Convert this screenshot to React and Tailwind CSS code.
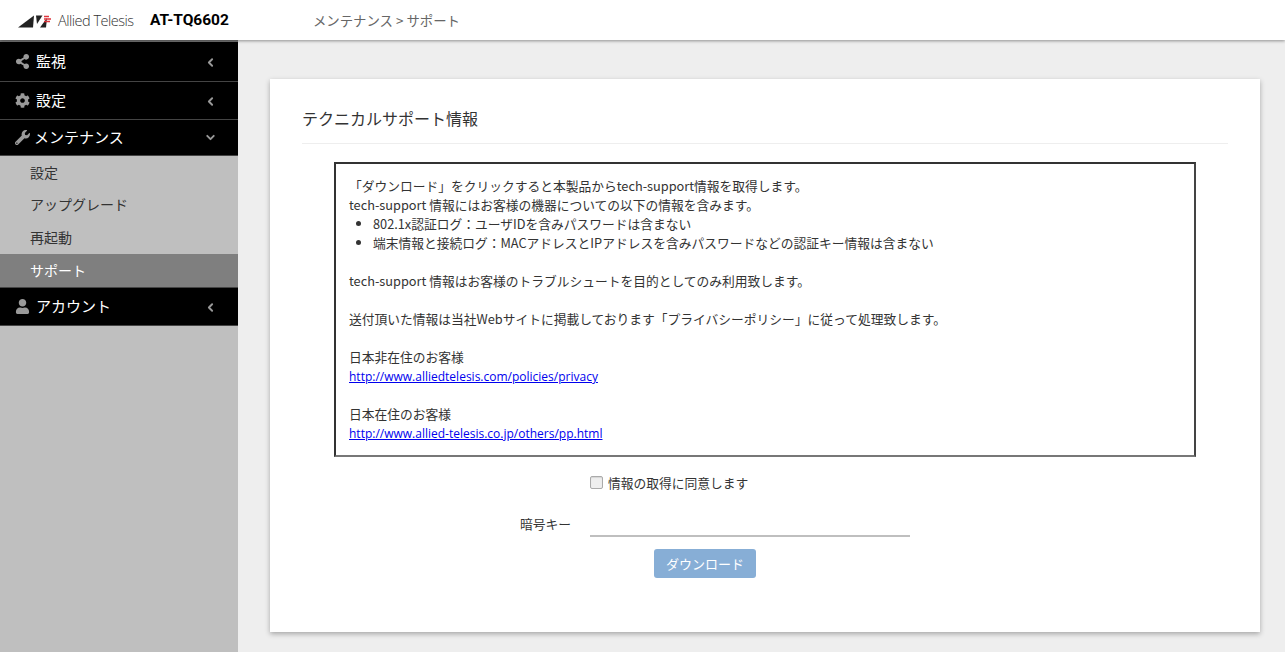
import React from 'react';
import { ChevronLeft, ChevronDown } from 'lucide-react';
import { FaShareAlt, FaCog, FaWrench, FaUser } from 'react-icons/fa';

const MainItem = ({ icon: Icon, label, open, height = 'h-[38px]', gap = 'ml-[6px]' }) => (
  <div className={`${height} flex items-center bg-black border-b border-[#444] pl-[15px] pr-[21px] text-white`}>
    <Icon className="w-[15px] h-[15px] text-[#999] shrink-0" />
    <span className={`${gap} text-[15px] leading-none flex-1 -mt-[1px]`}>{label}</span>
    {open
      ? <ChevronDown className="w-[13px] h-[13px] text-[#999]" strokeWidth={3.5} />
      : <ChevronLeft className="w-[13px] h-[13px] text-[#999] mt-[2px]" strokeWidth={3.5} />}
  </div>
);

const SubItem = ({ label, active }) => (
  <div className={`flex items-center pl-[30px] text-[14px] ${active ? 'h-[34px] bg-[#7f7f7f] text-white border-b border-[#444]' : 'h-[32.67px] text-[#333]'}`}>
    {label}
  </div>
);

const Logo = () => (
  <div className="flex items-center">
    <svg width="39" height="13" viewBox="0 0 39 13" className="shrink-0">
      <path d="M0 12.5 L16 0.5 L15 12.5 Z" fill="#222" />
      <path d="M18 0.5 L24.5 0.5 L19 9 Z" fill="#222" />
      <path d="M22 12.5 L29 3 L28 12.5 Z" fill="#222" />
      <path d="M26 1.5 h5 M26 4 h7 M26 6.5 h6" stroke="#e0343c" strokeWidth="1.5" />
    </svg>
    <span className="ml-[1px] text-[14.5px] tracking-[-0.5px] text-[#333] font-light font-['Open_Sans',sans-serif]">Allied Telesis</span>
  </div>
);

export default function App() {
  return (
    <div className="w-[1285px] h-[652px] overflow-hidden flex flex-col bg-[#eeeeee] text-[#333] font-['Noto_Sans_CJK_JP',sans-serif]">
      {/* Top bar */}
      <header className="h-[40px] shrink-0 bg-white flex items-center shadow-[0_1px_3px_rgba(0,0,0,0.4)] relative z-10">
        <div className="ml-[18px] w-[132px] mt-[2px]"><Logo /></div>
        <span className="text-[15.5px] mt-[2px] font-bold text-black font-['Roboto',sans-serif]">AT-TQ6602</span>
        <span className="ml-[84px] text-[13.4px] text-[#666]">メンテナンス &gt; サポート</span>
      </header>

      <div className="flex flex-1 min-h-0">
        {/* Sidebar */}
        <nav className="w-[238px] shrink-0 bg-[#bfbfbf] border-t-2 border-[#777]">
          <MainItem icon={FaShareAlt} label="監視" height="h-[39.5px]" />
          <MainItem icon={FaCog} label="設定" />
          <MainItem icon={FaWrench} label="メンテナンス" open height="h-[36.5px]" gap="ml-[4px]" />
          <SubItem label="設定" />
          <SubItem label="アップグレード" />
          <SubItem label="再起動" />
          <SubItem label="サポート" active />
          <MainItem icon={FaUser} label="アカウント" />
        </nav>

        {/* Content */}
        <main className="flex-1 pt-[39px] pl-[32px] pr-[25px]">
          <section className="bg-white h-[553px] shadow-[0_2px_5px_rgba(0,0,0,0.3)] pt-[23px] px-[32px]">
            <h1 className="text-[16px] leading-[32px] pb-[9px] border-b border-[#eeeeee] text-[#333]">テクニカルサポート情報</h1>

            <div className="mx-[32px] mt-[18px] h-[295px] border-2 border-t-[#333] border-l-[#333] border-r-[#444] border-b-[#777] px-[13px] pt-[12px] text-[12.75px] leading-[19px]">
              <p>「ダウンロード」をクリックすると本製品からtech-support情報を取得します。</p>
              <p>tech-support 情報にはお客様の機器についての以下の情報を含みます。</p>
              <ul className="list-disc pl-[24px]">
                <li>802.1x認証ログ：ユーザIDを含みパスワードは含まない</li>
                <li>端末情報と接続ログ：MACアドレスとIPアドレスを含みパスワードなどの認証キー情報は含まない</li>
              </ul>
              <p className="mt-[19px]">tech-support 情報はお客様のトラブルシュートを目的としてのみ利用致します。</p>
              <p className="mt-[19px]">送付頂いた情報は当社Webサイトに掲載しております「プライバシーポリシー」に従って処理致します。</p>
              <p className="mt-[19px]">日本非在住のお客様</p>
              <a href="#" className="block h-[19px] leading-[21px] text-[12px] text-[#0000ee] underline font-['Open_Sans',sans-serif]">http://www.alliedtelesis.com/policies/privacy</a>
              <p className="mt-[19px]">日本在住のお客様</p>
              <a href="#" className="block h-[19px] leading-[21px] text-[12px] text-[#0000ee] underline font-['Open_Sans',sans-serif]">http://www.allied-telesis.co.jp/others/pp.html</a>
            </div>

            <div className="mt-[16px] flex items-center pl-[288px] text-[12.75px] h-[19px]">
              <span className="w-[13px] h-[13px] rounded-[2px] border border-[#aaa] bg-[#eee] shadow-[inset_0_1px_1px_rgba(0,0,0,0.1)]" />
              <span className="ml-[5px]">情報の取得に同意します</span>
            </div>

            <div className="mt-[10px] flex items-end pl-[218px] h-[35px]">
              <span className="w-[70px] text-[12.75px] pb-[4px]">暗号キー</span>
              <div className="w-[320px] h-[35px] border-b-2 border-[#bfbfbf]" />
            </div>

            <div className="mt-[12px] pl-[352px]">
              <button className="w-[102px] h-[29px] rounded-[3px] bg-[#87aed6] text-white text-[13px]">ダウンロード</button>
            </div>
          </section>
        </main>
      </div>
    </div>
  );
}
